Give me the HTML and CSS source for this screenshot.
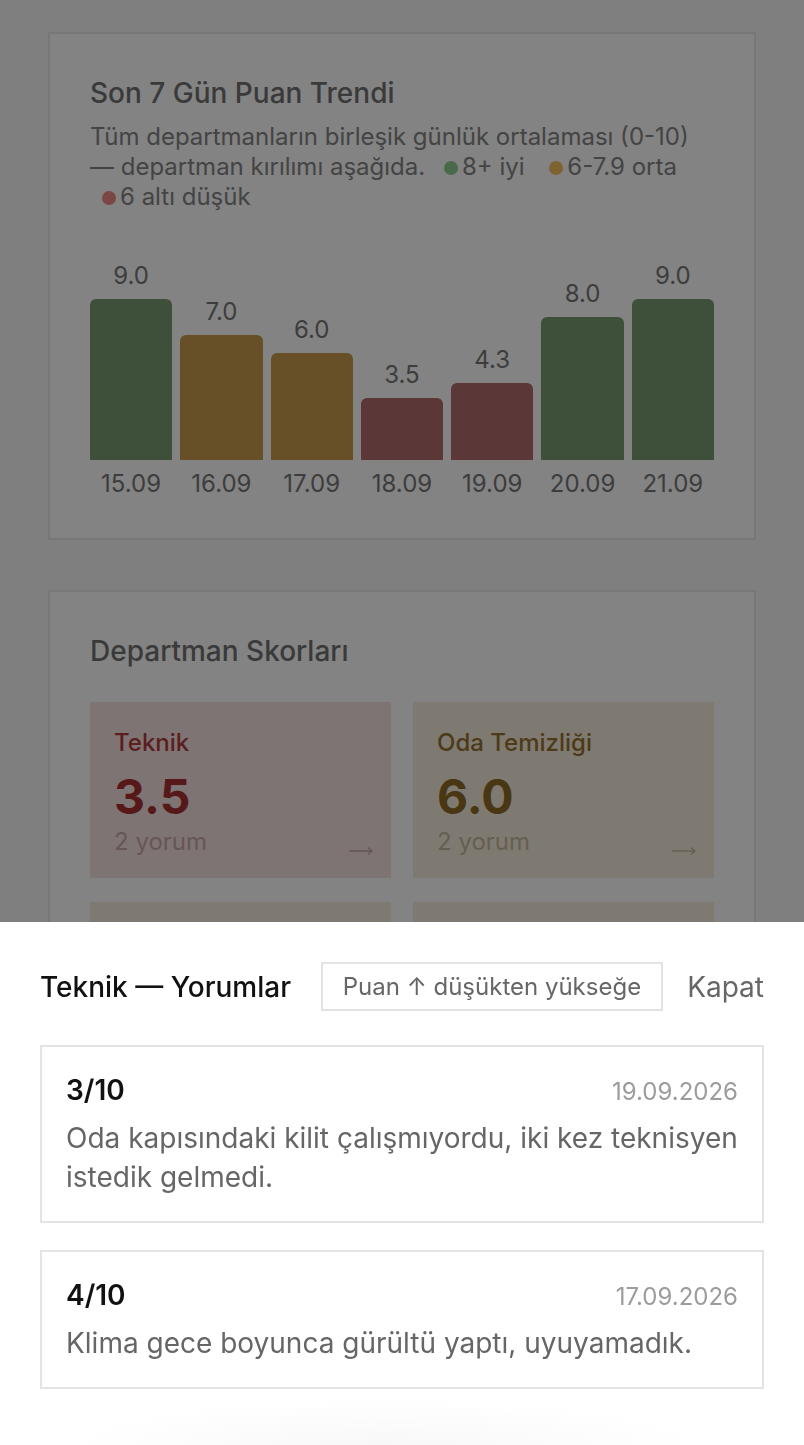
FILE: index.html
```html
<!DOCTYPE html>
<html lang="tr">
<head>
    <meta charset="UTF-8">
    <meta name="viewport" content="width=device-width, initial-scale=1">
    <title>Misafir Puanları</title>
    <link rel="stylesheet" href="styles.css">
</head>
<body>
<div class="page">
    <section class="card">
        <h2 class="card-title">Son 7 Gün Puan Trendi</h2>
        <p class="card-sub">
            <span>Tüm departmanların birleşik günlük ortalaması (0-10)</span>
            <span>—&nbsp;departman kırılımı aşağıda.</span>
            <span class="key good">8+ iyi</span>
            <span class="key mid">6-7.9 orta</span>
            <span class="key low">6 altı düşük</span>
        </p>
        <div class="chart">
            <div class="col"><span class="val">9.0</span><div class="bar good" style="height: 161px"></div></div>
            <div class="col"><span class="val">7.0</span><div class="bar mid" style="height: 125px"></div></div>
            <div class="col"><span class="val">6.0</span><div class="bar mid" style="height: 107px"></div></div>
            <div class="col"><span class="val">3.5</span><div class="bar low" style="height: 62px"></div></div>
            <div class="col"><span class="val">4.3</span><div class="bar low" style="height: 77px"></div></div>
            <div class="col"><span class="val">8.0</span><div class="bar good" style="height: 143px"></div></div>
            <div class="col"><span class="val">9.0</span><div class="bar good" style="height: 161px"></div></div>
        </div>
        <div class="days">
            <span>15.09</span><span>16.09</span><span>17.09</span><span>18.09</span><span>19.09</span><span>20.09</span><span>21.09</span>
        </div>
    </section>

    <section class="card">
        <h2 class="card-title">Departman Skorları</h2>
        <div class="tiles">
            <div class="tile low">
                <div class="tile-name">Teknik</div>
                <div class="tile-score">3.5</div>
                <div class="tile-count">2 yorum</div>
                <svg class="tile-arrow" width="26" height="10" viewBox="0 0 26 10" fill="none" stroke="currentColor" stroke-width="1.4">
                    <path d="M1 5h23M20 1.5l4 3.5-4 3.5"/>
                </svg>
            </div>
            <div class="tile mid">
                <div class="tile-name">Oda Temizliği</div>
                <div class="tile-score">6.0</div>
                <div class="tile-count">2 yorum</div>
                <svg class="tile-arrow" width="26" height="10" viewBox="0 0 26 10" fill="none" stroke="currentColor" stroke-width="1.4">
                    <path d="M1 5h23M20 1.5l4 3.5-4 3.5"/>
                </svg>
            </div>
            <!-- rest of the grid sits under the sheet -->
            <div class="tile mid"></div>
            <div class="tile mid"></div>
        </div>
    </section>
</div>

<div class="overlay"></div>

<div class="sheet">
    <div class="sheet-head">
        <h3 class="sheet-title">Teknik — Yorumlar</h3>
        <button class="sort">Puan ↑ düşükten yükseğe</button>
        <button class="close">Kapat</button>
    </div>
    <div class="reviews">
        <div class="review">
            <div class="review-top">
                <span class="score">3/10</span>
                <span class="date">19.09.2026</span>
            </div>
            <p>Oda kapısındaki kilit çalışmıyordu, iki kez teknisyen istedik gelmedi.</p>
        </div>
        <div class="review">
            <div class="review-top">
                <span class="score">4/10</span>
                <span class="date">17.09.2026</span>
            </div>
            <p>Klima gece boyunca gürültü yaptı, uyuyamadık.</p>
        </div>
    </div>
</div>
</body>
</html>
```

FILE: styles.css
```css
body {
    margin: 0;
    height: 100vh;
    overflow: hidden;
    background: #f7f7f7;
    font-family: Inter, "Noto Sans", sans-serif;
}

.page {
    padding: 32px 48px;
}

.card {
    background: #fff;
    border: 2px solid #e8e8e8;
    padding: 42px 40px 39px;
    margin-bottom: 50px;
}

.card-title {
    margin: 0;
    font-size: 28px;
    line-height: 34px;
    font-weight: 500;
    color: #727272;
}

.card-sub {
    margin: 12px 0 0;
    font-size: 24px;
    line-height: 30px;
    color: #848484;
}

.key {
    white-space: nowrap;
    margin: 0 6px 0 12px;
}

.key::before {
    content: "";
    display: inline-block;
    width: 14px;
    height: 14px;
    border-radius: 50%;
    margin-right: 4px;
}

.key.good::before { background: #8fcc91; }
.key.mid::before { background: #f5c15e; }
.key.low::before { background: #ef8a86; }

/* chart */
.chart {
    display: flex;
    align-items: flex-end;
    gap: 8px;
    height: 225px;
    margin-top: 23px;
}

.col {
    flex: 1;
    display: flex;
    flex-direction: column;
    align-items: center;
}

.val {
    font-size: 24px;
    line-height: 30px;
    margin-bottom: 8px;
    color: #777;
}

.bar {
    align-self: stretch;
    border-radius: 6px 6px 0 0;
}

.bar.good { background: #7a9b71; }
.bar.mid { background: #c89b4e; }
.bar.low { background: #b36b6b; }

.days {
    display: flex;
    gap: 8px;
    margin-top: 9px;
}

.days span {
    flex: 1;
    text-align: center;
    font-size: 24px;
    line-height: 30px;
    color: #777;
}

/* department tiles */
.tiles {
    display: grid;
    grid-template-columns: 1fr 1fr;
    gap: 24px 22px;
    margin-top: 34px;
}

.tile {
    position: relative;
    min-height: 176px;
    box-sizing: border-box;
    padding: 25px 24px 20px;
}

.tile-name {
    font-size: 24px;
    line-height: 32px;
    font-weight: 500;
}

.tile-score {
    margin-top: 12px;
    font-size: 48px;
    line-height: 52px;
    font-weight: 700;
}

.tile-count {
    margin-top: 3px;
    font-size: 24px;
    line-height: 32px;
}

.tile-arrow {
    position: absolute;
    right: 17px;
    bottom: 22px;
}

.tile.low { background: #f7e1e1; }
.tile.low .tile-name { color: #b03c3c; }
.tile.low .tile-score { color: #a83030; }
.tile.low .tile-count,
.tile.low .tile-arrow { color: #c8a8a8; }

.tile.mid { background: #f5eddd; }
.tile.mid .tile-name { color: #977232; }
.tile.mid .tile-score { color: #8f6b26; }
.tile.mid .tile-count,
.tile.mid .tile-arrow { color: #c6b89c; }

/* bottom sheet */
.overlay {
    position: fixed;
    inset: 0;
    background: rgba(0, 0, 0, 0.485);
}

.sheet {
    position: fixed;
    left: 0;
    right: 0;
    bottom: 0;
    padding: 40px 40px 56px;
    background: radial-gradient(ellipse 320px 45px at 48% 100%, #f8f8f8, #fff);
}

.sheet-head {
    display: flex;
    align-items: center;
    gap: 24px;
}

.sheet-title {
    flex: 1;
    margin: 0;
    font-size: 28px;
    font-weight: 500;
    color: #111;
}

.sort {
    font-family: inherit;
    font-size: 24px;
    line-height: 33px;
    padding: 6px 20px;
    border: 2px solid #e3e3e3;
    background: #fff;
    color: #666;
}

.close {
    font-family: inherit;
    font-size: 28px;
    padding: 0;
    border: 0;
    background: none;
    color: #666;
}

.reviews {
    display: flex;
    flex-direction: column;
    gap: 27px;
    margin-top: 34px;
}

.review {
    border: 2px solid #e3e3e3;
    padding: 26px 24px 24px;
}

.review-top {
    display: flex;
    justify-content: space-between;
    align-items: baseline;
    line-height: 34px;
}

.score {
    font-size: 28px;
    font-weight: 600;
    color: #111;
}

.date {
    font-size: 24px;
    color: #9c9c9c;
}

.review p {
    margin: 10px 0 0;
    font-size: 28px;
    line-height: 39px;
    color: #666;
}
```
